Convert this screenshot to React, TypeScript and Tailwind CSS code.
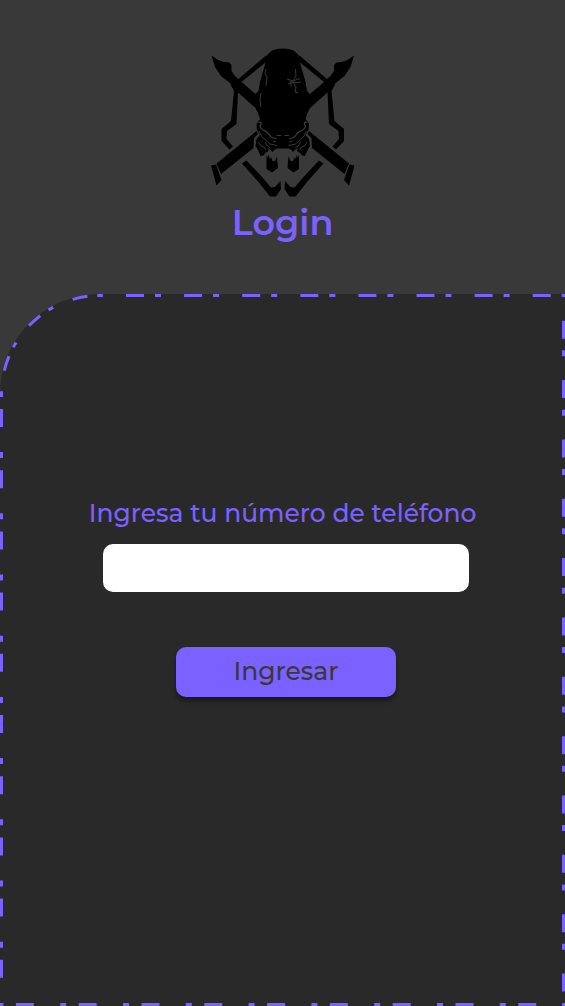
const DASH = '#7b61ff';

function EmblemHalf() {
  return (
    <>
      <path d="M211.5 55.5 218 60 224 62 229 62.500 231.500 65 231.500 71 235 76 238.500 79 266 55.500 268.500 60 241.500 82 255.500 94 258.500 91 260 82 262 75 266 61 267 55 272 50.500 277 49 283 48.500V148.500H277L274 150 272.500 152 270 149.500 268 148 268.500 151 265.500 153 263.500 155.500 260.500 156 257.500 149 255.500 146 256.500 139 260 135 257 130 256.500 124 260 119 258 113 255.500 108 238 92.500 236.500 124 227 131 226.500 139 233 146.500 229.500 149.500 221.500 141 221.500 129 231 121 234 91 231 85.500 230 83 221 76 215 67Z" />
      <path d="M256.500 131 258 134 254 138 253.500 148 221 174 216.500 163.500Z" />
      <path d="M211 165.500 216 164.500 221.500 180 216.500 185.500Z" />
      <path d="M242 163.500 246.500 160.500 262 177 271 187.500 275 187 280.500 181 281 189 276 196.500 270 196.500 258.500 182Z" />
      <path d="M266.500 155 268 158 268.500 154.500 270 159 271 157 272.500 161 275 161 277 156.500 278 168 272 172.500 266.500 169Z" />
    </>
  );
}

function FaceLines() {
  return (
    <>
      <path d="M258.500 122.500C261.500 121.500 262 124 260 126C260.500 130 264 130.500 267 132L271 137 276.500 139" strokeWidth="1.25" />
      <path d="M259 131 262 137 265 139.500 270 144 277 145.500" />
      <path d="M258.500 142 261 146 264 147 266 150M265 142 267.500 146 270 147.500M273 141 276 142M276.500 135.500H281" />
    </>
  );
}

function Emblem() {
  return (
    <svg viewBox="208 46 150 152" className="h-[152px] w-[150px]" fill="#000" aria-hidden="true">
      <EmblemHalf />
      <g transform="translate(565.5 0) scale(-1 1)">
        <EmblemHalf />
      </g>
      <g fill="none" stroke="#393939" strokeWidth="1">
        <FaceLines />
        <g transform="translate(565.5 0) scale(-1 1)">
          <FaceLines />
        </g>
        <path d="M266 69 265 73 267 77 266 86M261 93 260 99 261 107" />
        <path d="M295.500 69 296 76 293 81 287 79M288 84 293 82 297 79 300 79M293 82 296 87 295 92 298 93M293 83 301 82M291 81 291 86" />
      </g>
    </svg>
  );
}

function PanelOutline() {
  return (
    <svg
      className="pointer-events-none absolute inset-0 h-full w-full overflow-hidden"
      fill="none"
      stroke={DASH}
      strokeWidth="6"
      aria-hidden="true"
    >
      <path
        d="M100 1.5A98.500 98.500 0 0 0 1.5 100"
        pathLength="90"
        strokeWidth="3"
        strokeDasharray="1.6 5.8 8.8 12.2 3.2 5.8 8.8 12.2 3.2 5.8 8.8 12.2 1.6 0"
      />
      <line x1="100" y1="0" x2="100%" y2="0" strokeDasharray="18 11 6 23.1" strokeDashoffset="32.1" />
      <line x1="100%" y1="0" x2="100%" y2="100%" strokeDasharray="18 11.6 6 23.75" strokeDashoffset="32.65" />
      <line x1="0" y1="100%" x2="100%" y2="100%" strokeDasharray="18 26.3 6 12.5" strokeDashoffset="46.9" />
      <line x1="0" y1="100" x2="0" y2="100%" strokeDasharray="18 25.1 6 12.1" strokeDashoffset="46.2" />
    </svg>
  );
}

export default function App() {
  return (
    <div className="flex min-h-screen flex-col bg-[#393939] font-['Montserrat','Inter',sans-serif] text-[#7b61ff]">
      <header className="flex flex-col items-center pt-[46px] pb-[46px]">
        <Emblem />
        <h1 className="text-[35px] leading-[50px] font-semibold">Login</h1>
      </header>
      <main className="relative flex flex-1 flex-col rounded-tl-[100px] bg-[#292929]">
        <PanelOutline />
        <form className="flex flex-col items-center px-6 pt-[203px] pb-12" onSubmit={(e) => e.preventDefault()}>
          <label htmlFor="phone" className="text-center text-[25px] leading-8 font-medium">
            Ingresa tu número de teléfono
          </label>
          <div className="flex w-full flex-col items-center pt-[15px] pl-[7px]">
            <input
              id="phone"
              type="tel"
              className="h-12 w-full max-w-[366px] rounded-[10px] bg-white px-4 text-xl text-[#393939] outline-none"
            />
            <button
              type="submit"
              className="mt-[55px] h-[50px] w-[220px] rounded-[10px] bg-[#7b61ff] text-[25px] font-medium text-[#393939] shadow-[0_4px_4px_rgba(0,0,0,0.4)]"
            >
              Ingresar
            </button>
          </div>
        </form>
      </main>
    </div>
  );
}
